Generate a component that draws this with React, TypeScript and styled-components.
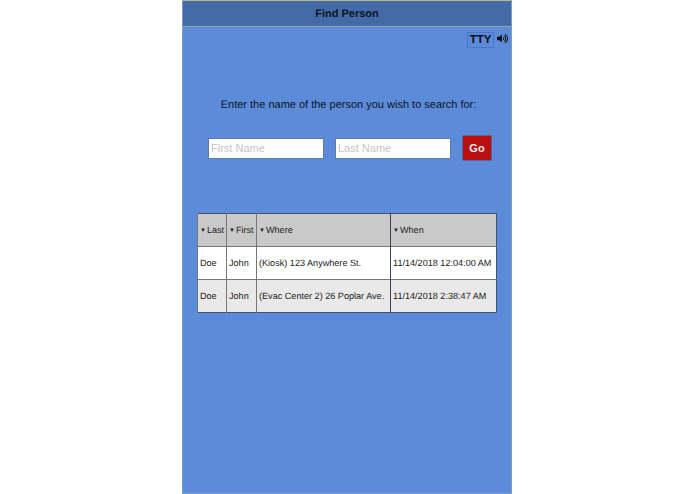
import React from 'react';
import styled, {createGlobalStyle} from 'styled-components';
import {FaVolumeUp} from 'react-icons/fa';

const Global = createGlobalStyle`
    html, body {
        margin: 0;
        padding: 0;
        background: #fff;
        font-family: "Liberation Sans", Arial, sans-serif;
        text-rendering: geometricPrecision;
    }
`;
const Page = styled.div`
    width: 695px;
    height: 494px;
    overflow: hidden;
    padding-left: 182px;
    box-sizing: border-box;
`;
const Phone = styled.main`
    box-sizing: border-box;
    width: 330px;
    height: 494px;
    background: #5b8bd9;
    border-left: 1px solid #7b9fc4;
    border-right: 1px solid #7b9fc4;
    border-bottom: 1px solid #7b9fc4;
    display: flex;
    flex-direction: column;
`;
const Header = styled.header`
    height: 27px;
    flex: none;
    box-sizing: border-box;
    border-top: 1px solid #b9b98c;
    border-bottom: 1px solid #8fa8a0;
    background: #456aa8;
    display: flex;
    align-items: center;
    justify-content: center;
    font-size: 11px;
    font-weight: bold;
    color: #0c1526;
`;
const TtyRow = styled.div`
    display: flex;
    justify-content: flex-end;
    align-items: flex-start;
    gap: 3px;
    padding: 5px 3px 0 0;
`;
const TtyButton = styled.div`
    box-sizing: border-box;
    width: 27px;
    height: 16px;
    border: 1px solid #4a77c4;
    display: flex;
    align-items: center;
    justify-content: center;
    font-size: 11.5px;
    font-weight: bold;
    color: #111;
`;
const Speaker = styled(FaVolumeUp)`
    margin-top: 1px;
    color: #111;
`;
const Prompt = styled.p`
    margin: 50px 0 0;
    padding-left: 3px;
    text-align: center;
    font-size: 11px;
    line-height: 14px;
    color: #0c1526;
`;
const SearchRow = styled.form`
    display: flex;
    align-items: center;
    margin-top: 23px;
    padding-left: 25px;
`;
const NameInput = styled.input`
    box-sizing: border-box;
    width: 116px;
    height: 21px;
    margin-right: 11px;
    padding: 0 2px;
    border: 1px solid #5f7ba8;
    background: #fff;
    font-family: inherit;
    font-size: 11px;
    &::placeholder {
        color: #c4c4c4;
        opacity: 1;
    }
`;
const GoButton = styled.button`
    box-sizing: border-box;
    width: 30px;
    height: 26px;
    padding: 0;
    border: 1px solid #54639a;
    border-radius: 2px;
    background: #b80f0f;
    color: #f4eeee;
    font-family: inherit;
    font-size: 11px;
    font-weight: bold;
`;
const Table = styled.table`
    box-sizing: border-box;
    width: 299px;
    height: 100px;
    margin: 52px 0 0 14px;
    border-collapse: collapse;
    table-layout: fixed;
    border: 1px solid #3f5273;
    font-size: 9.1px;
    color: #222;
`;
const HeadCell = styled.th<{$w: number; $dark?: boolean}>`
    box-sizing: border-box;
    width: ${p => p.$w}px;
    height: 33px;
    padding: 0 0 1px 2px;
    background: #c9c9c9;
    border-left: 1px solid ${p => (p.$dark ? '#3c4350' : '#777')};
    font-weight: normal;
    text-align: left;
    white-space: nowrap;
`;
const Caret = styled.span`
    font-size: 6px;
    margin-right: 1px;
    vertical-align: 1px;
`;
const Row = styled.tr<{$alt?: boolean}>`
    background: ${p => (p.$alt ? '#e9e9e9' : '#fff')};
    border-top: 1px solid #777;
`;
const Cell = styled.td<{$dark?: boolean}>`
    padding: 0 0 0 2px;
    border-left: 1px solid ${p => (p.$dark ? '#3c4350' : '#777')};
    white-space: nowrap;
`;

const columns = [
    {name: 'Last', w: 29},
    {name: 'First', w: 30},
    {name: 'Where', w: 134},
    {name: 'When', w: 106, dark: true},
];
const people = [
    {last: 'Doe', first: 'John', where: '(Kiosk) 123 Anywhere St.', when: '11/14/2018 12:04:00 AM'},
    {last: 'Doe', first: 'John', where: '(Evac Center 2) 26 Poplar Ave.', when: '11/14/2018 2:38:47 AM'},
];

const App = () => (
    <Page>
        <Global />
        <Phone>
            <Header>Find Person</Header>
            <TtyRow>
                <TtyButton>TTY</TtyButton>
                <Speaker size={11} />
            </TtyRow>
            <Prompt>Enter the name of the person you wish to search for:</Prompt>
            <SearchRow>
                <NameInput placeholder="First Name" />
                <NameInput placeholder="Last Name" />
                <GoButton type="button">Go</GoButton>
            </SearchRow>
            <Table>
                <thead>
                    <tr>
                        {columns.map(c => (
                            <HeadCell key={c.name} $w={c.w} $dark={c.dark}>
                                <Caret>▼</Caret>
                                {c.name}
                            </HeadCell>
                        ))}
                    </tr>
                </thead>
                <tbody>
                    {people.map((p, i) => (
                        <Row key={p.when} $alt={i === 1}>
                            <Cell>{p.last}</Cell>
                            <Cell>{p.first}</Cell>
                            <Cell>{p.where}</Cell>
                            <Cell $dark>{p.when}</Cell>
                        </Row>
                    ))}
                </tbody>
            </Table>
        </Phone>
    </Page>
);

export default App;
